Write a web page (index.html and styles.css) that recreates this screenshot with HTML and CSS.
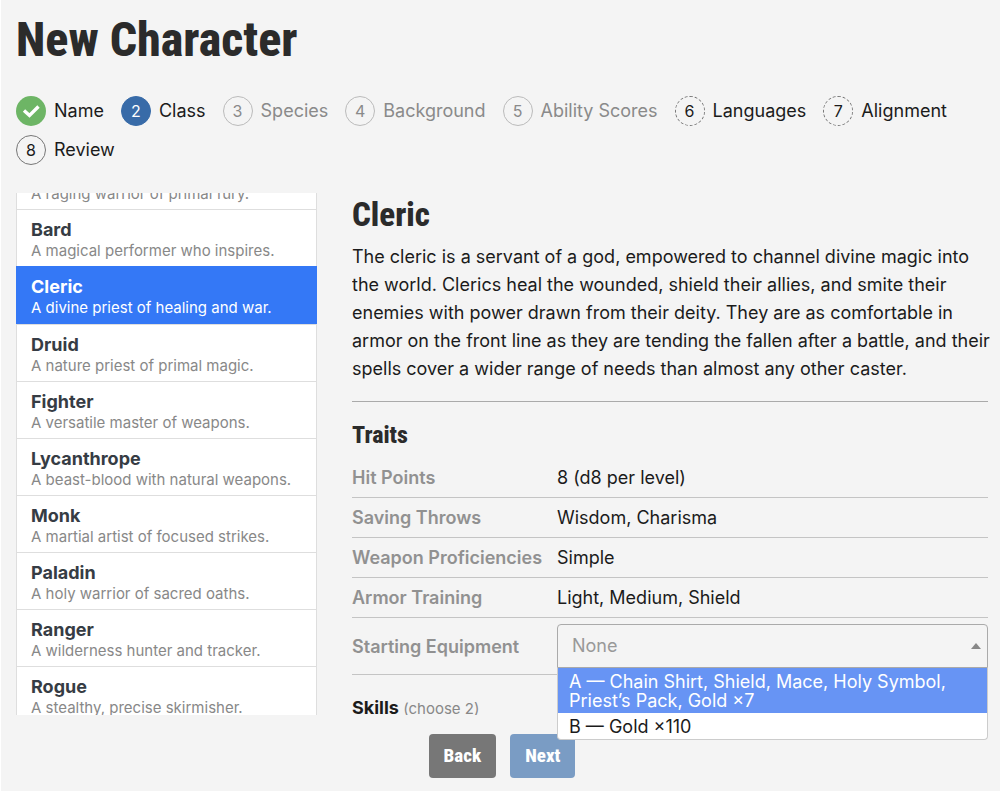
FILE: index.html
```html
<!DOCTYPE html>
<html lang="en">
<head>
<meta charset="utf-8">
<title>New Character</title>
<meta name="viewport" content="width=device-width, initial-scale=1">
<link rel="stylesheet" href="styles.css">
</head>
<body>
<div class="page">
  <h1 class="title">New Character</h1>

  <ol class="steps">
    <li><button type="button" class="step done"><span class="badge"><svg viewBox="0 0 30 30" width="30" height="30" aria-hidden="true"><path d="M8 14.5 L13.5 19.5 L22.5 10.5" fill="none" stroke="#fff" stroke-width="3.4"/></svg></span>Name</button></li>
    <li><button type="button" class="step current" aria-current="step"><span class="badge">2</span>Class</button></li>
    <li><button type="button" class="step locked" disabled><span class="badge">3</span>Species</button></li>
    <li><button type="button" class="step locked" disabled><span class="badge">4</span>Background</button></li>
    <li><button type="button" class="step locked" disabled><span class="badge">5</span>Ability Scores</button></li>
    <li><button type="button" class="step optional"><span class="badge">6</span>Languages</button></li>
    <li><button type="button" class="step optional"><span class="badge">7</span>Alignment</button></li>
    <li><button type="button" class="step"><span class="badge">8</span>Review</button></li>
  </ol>

  <main class="main">
    <nav class="classes" id="classes" aria-label="Classes">
      <button type="button" class="class"><strong>Barbarian</strong><span>A raging warrior of primal fury.</span></button>
      <button type="button" class="class"><strong>Bard</strong><span>A magical performer who inspires.</span></button>
      <button type="button" class="class selected" aria-pressed="true"><strong>Cleric</strong><span>A divine priest of healing and war.</span></button>
      <button type="button" class="class"><strong>Druid</strong><span>A nature priest of primal magic.</span></button>
      <button type="button" class="class"><strong>Fighter</strong><span>A versatile master of weapons.</span></button>
      <button type="button" class="class"><strong>Lycanthrope</strong><span>A beast-blood with natural weapons.</span></button>
      <button type="button" class="class"><strong>Monk</strong><span>A martial artist of focused strikes.</span></button>
      <button type="button" class="class"><strong>Paladin</strong><span>A holy warrior of sacred oaths.</span></button>
      <button type="button" class="class"><strong>Ranger</strong><span>A wilderness hunter and tracker.</span></button>
      <button type="button" class="class"><strong>Rogue</strong><span>A stealthy, precise skirmisher.</span></button>
    </nav>

    <section class="detail">
      <h2 class="name">Cleric</h2>
      <p class="description">The cleric is a servant of a god, empowered to channel divine magic into the world. Clerics heal the wounded, shield their allies, and smite their enemies with power drawn from their deity. They are as comfortable in armor on the front line as they are tending the fallen after a battle, and their spells cover a wider range of needs than almost any other caster.</p>
      <hr class="rule">
      <h3 class="subhead">Traits</h3>
      <table class="traits">
        <tbody>
          <tr><th scope="row">Hit Points</th><td>8 (d8 per level)</td></tr>
          <tr><th scope="row">Saving Throws</th><td>Wisdom, Charisma</td></tr>
          <tr><th scope="row">Weapon Proficiencies</th><td>Simple</td></tr>
          <tr><th scope="row">Armor Training</th><td>Light, Medium, Shield</td></tr>
          <tr class="choice">
            <th scope="row"><label for="equipment">Starting Equipment</label></th>
            <td>
              <div class="picker">
                <select id="equipment" class="select"><option>None</option></select>
                <svg class="arrow" viewBox="0 0 10 6" width="10" height="6" aria-hidden="true"><path d="M0 6 L5 0 L10 6 Z" fill="#888"/></svg>
              </div>
              <ul class="menu" role="listbox" aria-label="Starting Equipment">
                <li class="option active" role="option" aria-selected="true">A — Chain Shirt, Shield, Mace, Holy Symbol, Priest’s Pack, Gold ×7</li>
                <li class="option" role="option" aria-selected="false">B — Gold ×110</li>
              </ul>
            </td>
          </tr>
        </tbody>
      </table>
      <h4 class="skills">Skills <span>(choose 2)</span></h4>
    </section>
  </main>

  <footer class="actions">
    <button type="button" class="action back">Back</button>
    <button type="button" class="action next">Next</button>
  </footer>
</div>
<script src="script.js"></script>
</body>
</html>
```
FILE: styles.css
```css
* { box-sizing: border-box; }

body {
  margin: 0;
  background: #f4f4f4;
  color: #1b1b1b;
  font: 18px/28px Inter, "Liberation Sans", sans-serif;
}

button, select { font: inherit; color: inherit; }
button { border: 0; background: none; padding: 0; cursor: pointer; }
h1, h2, h3, h4, p, ol, ul { margin: 0; padding: 0; }
ol, ul { list-style: none; }

.page {
  display: flex;
  flex-direction: column;
  height: 100vh;
  padding: 10px 12px 13px 15px;
  border-left: 1px solid #fff;
}

.title, .name, .subhead, .action {
  font-family: "Roboto Condensed", "Liberation Sans Narrow", "DejaVu Sans Condensed", sans-serif;
  font-weight: 800;
  color: #2b2b2b;
}

.title { font-size: 48px; line-height: 60px; }

.steps {
  display: flex;
  flex-wrap: wrap;
  gap: 9px 17px;
  margin: 26px 0 28px;
}

.step { display: flex; align-items: center; gap: 8px; line-height: 30px; }

.badge {
  display: flex;
  align-items: center;
  justify-content: center;
  width: 30px;
  height: 30px;
  border: 1px solid #777;
  border-radius: 50%;
  font-size: 16px;
}

.done .badge { border: 0; background: #6db565; }
.current .badge { border-color: #386ba8; background: #386ba8; color: #fff; }
.locked { color: #8a8a8a; cursor: default; }
.locked .badge { border-color: #bbb; }
.optional .badge { border-style: dashed; }

.main {
  position: relative;
  z-index: 1;
  display: grid;
  grid-template-columns: 301px minmax(0, 1fr);
  grid-template-rows: minmax(0, 1fr);
  gap: 35px;
  flex: 1;
  min-height: 0;
}

.classes { overflow-y: auto; scrollbar-width: none; }

.class {
  display: flex;
  flex-direction: column;
  width: 100%;
  height: 57px;
  padding: 9px 14px 0;
  border: 1px solid #dedede;
  border-bottom-width: 0;
  background: #fff;
  text-align: left;
}

.class strong { font-weight: 700; line-height: 22px; color: #363c44; }
.class span { font-size: 15px; line-height: 20px; color: #888; white-space: nowrap; }
.class.selected { height: 58px; border-color: #3478f6; background: #3478f6; }
.class.selected strong, .class.selected span { color: #fff; }

/* The bleed lets long description lines run into the page gutter. */
.detail { overflow: hidden; margin-right: -8px; padding-right: 8px; }

.name { font-size: 33px; line-height: 44px; }

.description { margin: 6px -8px 18px 0; }

.rule { margin: 0; border: 0; border-top: 1px solid #aaa; }

.subhead { margin: 18px 0 7px; font-size: 24px; line-height: 30px; }

.traits { width: 100%; border-collapse: collapse; table-layout: fixed; }
.traits th, .traits td { height: 40px; padding: 2px 0 0; border-bottom: 1px solid #c4c4c4; text-align: left; }
.traits th { width: 205px; font-weight: 600; color: #919191; white-space: nowrap; }
.traits .choice th, .traits .choice td { height: 57px; }
.traits .choice td { padding: 0; }

.picker { display: grid; align-items: center; }
.picker > * { grid-area: 1 / 1; }
.arrow { justify-self: end; margin-right: 7px; pointer-events: none; }

.select {
  width: 100%;
  height: 44px;
  padding: 0 14px;
  border: 1px solid #aaa;
  border-radius: 4px 4px 0 0;
  background: transparent;
  color: #999;
  appearance: none;
}

.menu {
  position: absolute;
  width: calc(100% - 541px);
  border: 1px solid #ccc;
  border-top: 0;
  border-radius: 0 0 4px 4px;
  background: #fff;
}

.option { padding: 4px 11px 3px; line-height: 19px; }
.option.active { background: #6794f4; color: #fff; }

.skills { margin-top: 19px; font-weight: 700; }
.skills span { font-size: 15px; font-weight: 400; color: #888; }

.actions { display: flex; justify-content: center; gap: 14px; margin-top: 19px; }

.action { padding: 0 15px; border-radius: 4px; font-size: 19px; line-height: 44px; color: #fff; }
.back { background: #777; }
.next { background: #7a9cc4; }
```
FILE: script.js
```js
document.getElementById("classes").scrollTop = 41;
```
